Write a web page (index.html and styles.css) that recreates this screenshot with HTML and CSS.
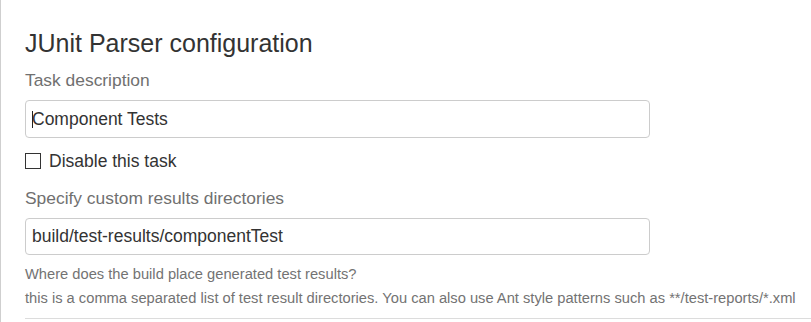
FILE: index.html
```html
<!DOCTYPE html>
<html lang="en">
<head>
  <meta charset="UTF-8" />
  <title>JUnit Parser configuration</title>
  <link rel="stylesheet" href="styles.css">
</head>
<body>
  <div class="panel">
    <h2>JUnit Parser configuration</h2>

    <label class="field-label" for="taskDesc">Task description</label>
    <div class="input-wrap">
      <input id="taskDesc" class="text-input" type="text" value="Component Tests" />
      <span class="caret"></span>
    </div>

    <label class="check-row">
      <input type="checkbox" class="check" />
      <span>Disable this task</span>
    </label>

    <label class="field-label spaced" for="resultDirs">Specify custom results directories</label>
    <div class="input-wrap">
      <input id="resultDirs" class="text-input short" type="text" value="build/test-results/componentTest" />
    </div>

    <div class="help">
      <div>Where does the build place generated test results?</div>
      <div>this is a comma separated list of test result directories. You can also use Ant style patterns such as **/test-reports/*.xml</div>
    </div>

    <hr class="divider" />
  </div>
</body>
</html>
```

FILE: styles.css
```css
body {
  margin: 0;
  background: #fff;
  font-family: "Liberation Sans", Arial, sans-serif;
  color: #333;
  height: 322px;
  overflow: hidden;
}

.panel {
  border-left: 1px solid #cfcfcf;
  padding: 28px 0 0 24px;
  min-height: 322px;
  box-sizing: border-box;
}

h2 {
  margin: 0;
  font-size: 25px;
  font-weight: normal;
  line-height: 30px;
  color: #333;
}

.field-label {
  display: block;
  margin-top: 12px;
  font-size: 17.4px;
  line-height: 20px;
  color: #707070;
}

.field-label.spaced {
  margin-top: 17px;
}

.input-wrap {
  position: relative;
  width: 625px;
  margin-top: 10px;
}

.text-input {
  display: block;
  box-sizing: border-box;
  width: 625px;
  height: 38px;
  margin: 0;
  padding: 0 6px;
  border: 1px solid #ccc;
  border-radius: 4px;
  font-family: inherit;
  font-size: 17.5px;
  color: #333;
  background: #fff;
  outline: none;
}

.text-input.short {
  height: 37px;
}

.caret {
  position: absolute;
  left: 7px;
  top: 11px;
  width: 1px;
  height: 17px;
  background: #222;
}

.check-row {
  display: flex;
  align-items: center;
  gap: 8px;
  margin-top: 13px;
  font-size: 17.5px;
  line-height: 20px;
  color: #333;
}

.check {
  appearance: none;
  -webkit-appearance: none;
  width: 16px;
  height: 16px;
  margin: 0;
  border: 1px solid #333;
  background: #fff;
  box-sizing: border-box;
}

.help {
  margin-top: 7px;
  font-size: 14.7px;
  line-height: 24px;
  color: #737373;
}

.divider {
  margin: 8px 0 0;
  border: none;
  border-top: 1px solid #dcdcdc;
}
```
